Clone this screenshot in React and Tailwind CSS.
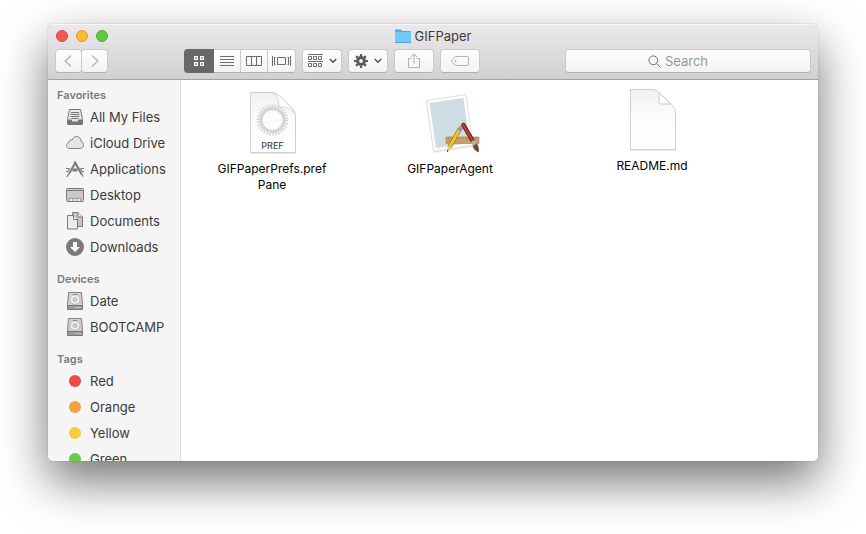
/**
 * Finder window: title bar with toolbar, sidebar with favorites,
 * devices and tags, and an icon view of the current folder.
 */

const trafficLights = [
  { label: 'Close', style: 'bg-[#ee5c54] border-[#d9443d]' },
  { label: 'Minimize', style: 'bg-[#f8bc30] border-[#dd9f1f]' },
  { label: 'Zoom', style: 'bg-[#5fc944] border-[#48ae2f]' },
];

const controlStyle =
  'flex h-6 items-center justify-center rounded border border-[#cbc9cb] border-b-[#b3b1b3] bg-linear-to-b from-[#fefefe] to-[#f3f3f3]';

/* ---------- toolbar icons ---------- */

function ChevronIcon({ flip }) {
  return (
    <svg width="8" height="12" viewBox="0 0 8 12" fill="none" stroke="#b5b5b5" strokeWidth="1.4">
      <path d={flip ? 'M1 .6 6.8 6 1 11.4' : 'M7 .6 1.2 6 7 11.4'} />
    </svg>
  );
}

function CaretIcon() {
  return (
    <svg width="8" height="6" viewBox="0 0 8 6" fill="none" stroke="#4d4d4d" strokeWidth="1.5">
      <path d="M.8 1 4 4.2 7.2 1" />
    </svg>
  );
}

function GridIcon() {
  return (
    <svg width="10" height="10" viewBox="0 0 10 10" fill="none" stroke="#fff" strokeWidth="1.2">
      <rect x=".6" y=".6" width="2.8" height="2.8" />
      <rect x="6.6" y=".6" width="2.8" height="2.8" />
      <rect x=".6" y="6.6" width="2.8" height="2.8" />
      <rect x="6.6" y="6.6" width="2.8" height="2.8" />
    </svg>
  );
}

function ListIcon() {
  return (
    <svg width="14" height="10" viewBox="0 0 14 10" stroke="#6b6b6b">
      <path d="M0 .5h14M0 3.5h14M0 6.5h14M0 9.5h14" />
    </svg>
  );
}

function ColumnsIcon() {
  return (
    <svg width="16" height="10" viewBox="0 0 16 10" fill="none" stroke="#6b6b6b">
      <path d="M.5.5h15v9H.5zM5.5.5v9M10.5.5v9" />
    </svg>
  );
}

function CoverFlowIcon() {
  return (
    <svg width="19" height="10" viewBox="0 0 19 10" fill="none" stroke="#6b6b6b">
      <path d="M.5 0v10M2.5 1v8M16.5 1v8M18.5 0v10M2.5 1.5h1M2.5 8.5h1M15.5 1.5h1M15.5 8.5h1M5.5 1.5h8v7h-8z" />
    </svg>
  );
}

function ArrangeIcon() {
  return (
    <svg width="15" height="14" viewBox="0 0 15 14" fill="none" stroke="#6b6b6b">
      <path d="M0 .5h15M0 7.5h15M1.5 2.500h2v3h-3v-3zM6.500 2.500h2v3h-3v-3zM11.500 2.500h2v3h-3v-3zM1.500 9.500h2v3h-3v-3zM6.500 9.500h2v3h-3v-3zM11.500 9.500h2v3h-3v-3z" />
    </svg>
  );
}

function GearIcon() {
  return (
    <svg width="14" height="14" viewBox="-7 -7 14 14" fill="none" stroke="#5c5c5c">
      <circle r="3.4" strokeWidth="3" />
      <path
        strokeWidth="2.2"
        d="M0-4.3V-7M0 4.3V7M-4.3 0H-7M4.3 0H7M3-3 4.9-4.9M-3-3-4.9-4.9M3 3 4.9 4.9M-3 3-4.9 4.9"
      />
    </svg>
  );
}

function ShareIcon() {
  return (
    <svg width="12" height="16" viewBox="0 0 12 16" fill="none" stroke="#b2b2b2">
      <path d="M3.5 5.5h-3v9h11v-9h-3M6 10.5V1M3 4l3-3 3 3" />
    </svg>
  );
}

function TagIcon() {
  return (
    <svg width="18" height="10" viewBox="0 0 18 10" fill="none" stroke="#b2b2b2">
      <path d="M4.6.5H16q1.5 0 1.5 1.5v6q0 1.5-1.5 1.5H4.6L.9 6Q.2 5 .9 4z" />
      <circle cx="4.5" cy="5" r=".7" />
    </svg>
  );
}

function SearchIcon() {
  return (
    <svg width="13" height="13" viewBox="0 0 13 13" fill="none" stroke="#6e6e6e">
      <circle cx="5.3" cy="5.3" r="4.4" />
      <path d="m8.5 8.5 4 4" />
    </svg>
  );
}

function FolderIcon() {
  return (
    <svg width="16" height="14" viewBox="0 0 16 14">
      <path d="M0 .5h6L7.2 2H16v12H0z" fill="#4bb0dc" />
      <path d="M0 3h16v10.5H0z" fill="#6dcbf5" />
      <path d="M0 13h16v1H0z" fill="#49a8d3" />
    </svg>
  );
}

/* ---------- sidebar icons ---------- */

function AllFilesIcon() {
  return (
    <svg width="18" height="18" viewBox="0 0 18 18">
      <path d="M3.5 1.5h11l2 10V16q0 .5-.5.5H2q-.5 0-.5-.5v-4.5z" fill="#e9e9e9" stroke="#777" />
      <path d="M2 11.5h3.5l1 2h5l1-2H16V16q0 .5-.5.5h-13q-.5 0-.5-.5z" fill="#777" />
      <path d="M5 4.5h8M4.5 6.5h9M4.5 8.5h9M5.5 10.5h7" stroke="#777" />
    </svg>
  );
}

function CloudIcon() {
  return (
    <svg width="18" height="18" viewBox="0 0 18 18">
      <path
        d="M4 14.5C2 14.5.5 13.3.5 11.5c0-1.5 1-2.6 2.4-2.9C2.8 6.6 4.6 5.3 6.3 6 7 3.6 8.7 2.5 10.6 2.5c2.6 0 4.4 2 4.3 4.6 1.6.5 2.6 1.8 2.6 3.6 0 2.2-1.5 3.8-3.7 3.8z"
        fill="#e4e4e4"
        stroke="#808080"
      />
    </svg>
  );
}

function ApplicationsIcon() {
  return (
    <svg width="18" height="18" viewBox="0 0 18 18" fill="none" stroke="#7b7b7b">
      <path d="M9.5 2.5 2.8 14" strokeWidth="2" />
      <path d="M2.5 14 1 17" strokeWidth="1.2" />
      <path d="M8.5 1.5 15.5 14" strokeWidth="2.2" />
      <path d="m15.2 13.5 1.8 3" strokeWidth="1.4" />
      <path d="M0 8.5h3.5l-1.500 3H0M18 8.5h-3.500l1.500 3h2" />
      <path d="M6.5 10h5" strokeWidth="3" />
    </svg>
  );
}

function DesktopIcon() {
  return (
    <svg width="18" height="18" viewBox="0 0 18 18">
      <rect x=".5" y="2.5" width="17" height="13" rx="1" fill="#c9c9c9" stroke="#7b7b7b" />
      <path d="M1 4.5h16" stroke="#7b7b7b" />
      <path d="M4 13h10v2H4z" fill="#f2f2f2" />
      <path d="M3.5 15v-2.5h11V15M6.5 13v2M9 13v2M11.5 13v2" fill="none" stroke="#8a8a8a" strokeWidth=".7" />
    </svg>
  );
}

function DocumentsIcon() {
  return (
    <svg width="18" height="18" viewBox="0 0 18 18" stroke="#7b7b7b" strokeLinejoin="round">
      <path d="M6.5.5H12L16.5 5v9.500h-10z" fill="#c4c4c4" />
      <path d="M12 .5V5h4.5" fill="#eee" />
      <path d="M1.5 3.5h6l4 4V17h-10z" fill="#ebebeb" />
      <path d="M7.5 3.5v4h4" fill="#fff" />
    </svg>
  );
}

function DownloadsIcon() {
  return (
    <svg width="18" height="18" viewBox="0 0 18 18">
      <circle cx="9" cy="9" r="9" fill="#7b7b7b" />
      <path d="M7 4h4v5h3l-5 5-5-5h3z" fill="#fff" />
    </svg>
  );
}

function DiskIcon() {
  return (
    <svg width="18" height="18" viewBox="0 0 18 18">
      <path d="M2.5.5h13l1 12.500v4q0 .5-.5.500H2q-.5 0-.5-.5v-4z" fill="#d0d0d0" stroke="#828282" />
      <path d="M1.5 13.5h15V17q0 .5-.5.5H2q-.5 0-.5-.5z" fill="#9b9b9b" stroke="#777" />
      <ellipse cx="9" cy="7.5" rx="5" ry="4.8" fill="#eee" stroke="#b2b2b2" strokeWidth=".8" />
      <ellipse cx="9" cy="7.5" rx="2" ry="1.7" fill="#ddd" stroke="#9a9a9a" strokeWidth=".8" />
      <path d="M7 2.5h4" stroke="#888" />
      <path d="M9.5 15.5h1M11.5 15.5h1M13.5 15.5h1" stroke="#e4e4e4" />
    </svg>
  );
}

/* ---------- file icons ---------- */

function PageIcon({ id, children }) {
  return (
    <svg width="50" height="64" viewBox="-1 0 50 64">
      <defs>
        <linearGradient id={id} x1="0" y1="0" x2="0" y2="1">
          <stop offset="0" stopColor="#f1f1f1" />
          <stop offset=".4" stopColor="#fbfbfb" />
          <stop offset="1" stopColor="#fff" />
        </linearGradient>
      </defs>
      <path d="M2 62h46" stroke="#b9b9b9" strokeOpacity=".6" />
      <path d="M2.5 1.5H24q4 0 7.5 3.5l12 11.5q4 4 4 8v37h-45z" fill={`url(#${id})`} stroke="#cfcfcf" />
      {children}
    </svg>
  );
}

function PrefPaneIcon() {
  return (
    <PageIcon id="pref">
      <path d="M25 2q6 3 6 14 11-1 16 7-1-3-3.5-6L31.5 5Q28.5 2 25 2z" fill="#fff" stroke="#d0d0d0" strokeWidth=".8" />
      <circle cx="24.5" cy="29" r="14" fill="none" stroke="#d5d5d5" strokeWidth="3.5" strokeDasharray="1.5 1.432" />
      <circle cx="24.5" cy="29" r="11.5" fill="none" stroke="#d5d5d5" strokeWidth="3" />
      <text x="24.5" y="58" textAnchor="middle" fontSize="9" fontWeight="500" fill="#4b4b4b">
        PREF
      </text>
    </PageIcon>
  );
}

function BlankPageIcon() {
  return (
    <PageIcon id="blank">
      <path d="M31 4.5V14q0 2 2 2h10z" fill="#fff" stroke="#cacaca" />
    </PageIcon>
  );
}

function AgentIcon() {
  return (
    <svg width="60" height="64" viewBox="0 0 60 64">
      <path d="m6 12 39-6 8 50-39 6z" fill="#000" fillOpacity=".08" />
      <path d="m6.5 9.5 39.5-6 7 51-39.5 6z" fill="#fdfdfd" stroke="#d6d6d6" strokeWidth=".8" />
      <path d="m9.5 12 34-5 6 45L16 57z" fill="#cfdde3" />
      <path d="M26 46h33v6.5H26z" fill="#c79f6c" stroke="#a98253" strokeWidth=".6" />
      <path
        d="M28.5 46v2.500M31.500 46v2M34.500 46v2.500M37.500 46v2M40.500 46v2.500M43.500 46v2M46.500 46v2.500M49.500 46v2M52.500 46v2.500M55.500 46v2"
        stroke="#a07a4a"
        strokeWidth=".5"
      />
      <path d="M39.5 38.5 29.5 56" stroke="#9c6a10" strokeWidth="4.4" />
      <path d="M39.5 38.5 29.5 56" stroke="#f6c32b" strokeWidth="3.2" />
      <path d="m27.400 55 4.100 2.300-4.500 4z" fill="#e9c48d" />
      <path d="m27.200 59 1.300.8-1.600 1.700z" fill="#222" />
      <path d="m40.7 37-1.300 2.300" stroke="#7b98aa" strokeWidth="4.4" />
      <path d="m42 35-1.300 2.200" stroke="#ec7d9a" strokeWidth="4.2" />
      <path d="m43.5 34 9.500 16.500" stroke="#6d1d14" strokeWidth="4.4" strokeLinecap="round" />
      <path d="m43.3 34 9.500 16" stroke="#c2442f" strokeWidth="2.2" strokeLinecap="round" />
      <path d="m52.5 50 2.500 4" stroke="#a6b4bd" strokeWidth="4.4" />
      <path d="m52.7 55 4.300-2.500q2.500 4 1.700 9-5-2-6-6.500z" fill="#6f4c31" />
    </svg>
  );
}

/* ---------- data ---------- */

const sections = [
  {
    title: 'Favorites',
    items: [
      { name: 'All My Files', Icon: AllFilesIcon },
      { name: 'iCloud Drive', Icon: CloudIcon },
      { name: 'Applications', Icon: ApplicationsIcon },
      { name: 'Desktop', Icon: DesktopIcon },
      { name: 'Documents', Icon: DocumentsIcon },
      { name: 'Downloads', Icon: DownloadsIcon },
    ],
  },
  {
    title: 'Devices',
    items: [
      { name: 'Date', Icon: DiskIcon },
      { name: 'BOOTCAMP', Icon: DiskIcon },
    ],
  },
  {
    title: 'Tags',
    items: [
      { name: 'Red', dot: 'bg-[#f04b4b]' },
      { name: 'Orange', dot: 'bg-[#f4a23f]' },
      { name: 'Yellow', dot: 'bg-[#f5cd40]' },
      { name: 'Green', dot: 'bg-[#66cd48]' },
    ],
  },
];

const views = [
  { label: 'Icons', Icon: GridIcon },
  { label: 'List', Icon: ListIcon },
  { label: 'Columns', Icon: ColumnsIcon },
  { label: 'Cover Flow', Icon: CoverFlowIcon },
];

/* ---------- layout ---------- */

function Toolbar() {
  return (
    <div className="flex items-center px-[7px]">
      <div className="mr-[76px] flex">
        <button aria-label="Back" className={`${controlStyle} w-[27px] pr-0.5`}>
          <ChevronIcon />
        </button>
        <button aria-label="Forward" className={`${controlStyle} -ml-px w-[27px]`}>
          <ChevronIcon flip />
        </button>
      </div>

      <div className="mr-1.5 flex" role="group" aria-label="View">
        {views.map(({ label, Icon }, i) => (
          <button
            key={label}
            aria-label={label}
            aria-pressed={i === 0}
            className={
              i === 0
                ? 'flex h-6 w-[30px] items-center justify-center rounded-l bg-[#686868]'
                : `${controlStyle} w-[27px] rounded-none border-l-0 last:w-7 last:rounded-r`
            }
          >
            <Icon />
          </button>
        ))}
      </div>

      <div className="flex gap-1.5">
        <button aria-label="Arrange" className={`${controlStyle} w-10 gap-1.5`}>
          <ArrangeIcon />
          <CaretIcon />
        </button>
        <button aria-label="Action" className={`${controlStyle} w-10 gap-1.5`}>
          <GearIcon />
          <CaretIcon />
        </button>
        <button aria-label="Share" disabled className={`${controlStyle} w-10`}>
          <ShareIcon />
        </button>
        <button aria-label="Edit tags" disabled className={`${controlStyle} w-10`}>
          <TagIcon />
        </button>
      </div>

      <label className={`${controlStyle} ml-auto w-[246px] gap-1 pr-5`}>
        <SearchIcon />
        <input
          type="text"
          aria-label="Search"
          placeholder="Search"
          className="field-sizing-content bg-transparent text-[13px] leading-4 outline-none placeholder:text-[#999]"
        />
      </label>
    </div>
  );
}

function Sidebar() {
  return (
    <nav className="w-[133px] shrink-0 overflow-hidden border-r border-[#dcdcdc] bg-[#f5f5f5] pt-1.5">
      {sections.map((section) => (
        <section key={section.title} className="mb-2.5">
          <h2 className="pl-[9px] text-[11px] leading-[18px] font-semibold text-[#7a7a7a]">{section.title}</h2>
          <ul>
            {section.items.map(({ name, Icon, dot }) => (
              <li key={name}>
                <a href="#" className="flex h-[26px] items-center gap-1.5 pl-[18px] text-[13px] leading-4 whitespace-nowrap text-[#3b3b3b]">
                  <span className="flex w-[18px] justify-center">
                    {Icon ? <Icon /> : <span className={`size-3 rounded-full ${dot}`} />}
                  </span>
                  {name}
                </a>
              </li>
            ))}
          </ul>
        </section>
      ))}
    </nav>
  );
}

function File({ children, icon }) {
  return (
    <button className="flex w-[116px] flex-col items-center gap-1.5 text-xs leading-4 text-black">
      {icon}
      <span>{children}</span>
    </button>
  );
}

export default function App() {
  return (
    <main className="flex h-screen flex-col bg-white px-12 pt-6 pb-[73px] font-['Inter','Liberation_Sans',sans-serif]">
      <div className="flex min-h-0 flex-1 flex-col overflow-hidden rounded-[5px] shadow-[0_0_1px_rgba(0,0,0,0.5),0_20px_48px_rgba(0,0,0,0.55)]">
        <header className="h-14 shrink-0 border-b border-[#a3a1a3] bg-linear-to-b from-[#ebe9eb] to-[#d2d0d2] shadow-[inset_0_1px_0_#f6f5f6]">
          <div className="grid h-[25px] grid-cols-[1fr_auto_1fr] items-center pb-px">
            <div className="flex gap-2 pl-2">
              {trafficLights.map((light) => (
                <button key={light.label} aria-label={light.label} className={`size-3 rounded-full border ${light.style}`} />
              ))}
            </div>
            <h1 className="flex items-center gap-1 text-[13px] leading-4 text-[#3d3d3d]">
              <FolderIcon />
              GIFPaper
            </h1>
          </div>
          <Toolbar />
        </header>

        <div className="flex min-h-0 flex-1">
          <Sidebar />
          <section className="flex flex-1 items-start bg-white pt-[11px] pl-[33px]">
            <File icon={<PrefPaneIcon />}>
              GIFPaperPrefs.pref
              <br />
              Pane
            </File>
            <div className="ml-[62px]">
              <File icon={<AgentIcon />}>GIFPaperAgent</File>
            </div>
            <div className="-mt-[3px] ml-[86px]">
              <File icon={<BlankPageIcon />}>README.md</File>
            </div>
          </section>
        </div>
      </div>
    </main>
  );
}
